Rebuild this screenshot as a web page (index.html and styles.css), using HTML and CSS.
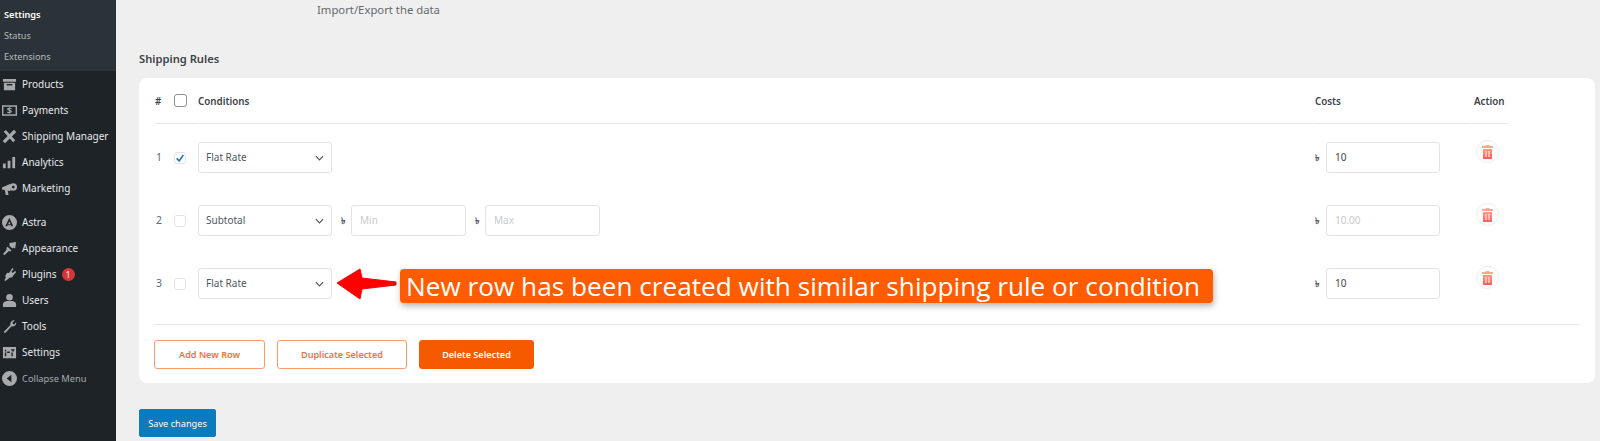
FILE: index.html
```html
<!DOCTYPE html>
<html lang="en">
<head>
    <meta charset="UTF-8">
    <title>Shipping Rules</title>
    <link rel="stylesheet" href="styles.css">
</head>
<body>
    <aside class="sidebar">
        <ul class="submenu">
            <li class="current">Settings</li>
            <li>Status</li>
            <li>Extensions</li>
        </ul>
        <ul class="menu">
            <li><svg viewBox="0 0 16 16"><path d="M1 2h14v3H1zM2 6h12v8H2z"/><path d="M5 7.500h6v1.500H5z" fill="#1d2327"/></svg>Products</li>
            <li><svg viewBox="0 0 16 16"><path fill-rule="evenodd" d="M0 2.500h16v11H0zM1.500 4v8h13V4z"/><text x="8" y="11.500" class="dollar">$</text></svg>Payments</li>
            <li><svg viewBox="0 0 16 16"><path d="M2 14L14 2" stroke="#a7aaad" stroke-width="3.500"/><path d="M3 2l10 11" stroke="#a7aaad" stroke-width="3"/></svg>Shipping Manager</li>
            <li><svg viewBox="0 0 16 16"><path d="M1 9h3v5H1zM6 6h3v8H6zM11 2h3v12h-3z"/></svg>Analytics</li>
            <li class="group-end"><svg viewBox="0 0 16 16"><path d="M0 7l9-4v8l-3-1 1 5H4L3 9.500 0 9z"/><circle cx="12" cy="6.500" r="4"/><circle cx="12" cy="6.500" r="1.500" fill="#1d2327"/></svg>Marketing</li>
            <li><svg viewBox="0 0 16 16"><path fill-rule="evenodd" d="M8 0a8 8 0 1 0 0 16A8 8 0 0 0 8 0zM7.800 3L12 12h-2L7.800 7 6.500 9.800H9l.6 1.200H6l-.5 1H3.500z"/></svg>Astra</li>
            <li><svg viewBox="0 0 16 16"><path d="M8 2l7-1-1 7-2-1-1 1-2-2-1-1zM6 6l4 4-1.500 1.500-1-1L3 15l-2-1 4-5-.5-1.500z"/></svg>Appearance</li>
            <li><svg viewBox="0 0 16 16"><path d="M11 1l1.500 1L10 5l1.500 1.500L14 4l1 1.500-3 3.500-1 2-3 .5-2.500 2-2 1.500-1-1 1.500-2.500-.5-2.500L5.500 6l2 .5z"/></svg>Plugins<span class="badge">1</span></li>
            <li><svg viewBox="0 0 16 16"><circle cx="8" cy="4.500" r="3.500"/><path d="M1 15v-3c0-2 2-3 4-3.500h6c2 .5 4 1.500 4 3.500v3z"/></svg>Users</li>
            <li><svg viewBox="0 0 16 16"><path d="M15 3.500c.5 2-1 4.500-3.500 4.500-.5 0-1 0-1.300-.2L4 14.500c-1 1-2.500-.5-1.500-1.500L9 6.500C8.500 4 10.500 1 13.500 1.500L11 4l1 1.500 1 .3z"/></svg>Tools</li>
            <li><svg viewBox="0 0 16 16"><path fill-rule="evenodd" d="M1 2h14v12H1zM3 8v4h1.500V8zM3 5v2h1.500V5zM5.500 7v1.500h3V7zM10 8v4h1.500V8zM9.500 4.500L11 7h1.500l1-2.500z"/></svg>Settings</li>
            <li class="collapse"><svg viewBox="0 0 16 16"><path fill-rule="evenodd" d="M8 0a8 8 0 1 0 0 16A8 8 0 0 0 8 0zM10 4v8L5 8z"/></svg>Collapse Menu</li>
        </ul>
    </aside>

    <main class="content">
        <p class="import-note">Import/Export the data</p>
        <h2>Shipping Rules</h2>

        <section class="card">
            <svg class="defs" width="0" height="0"><linearGradient id="binFill" x1="0" y1="0" x2="0" y2="1"><stop offset="0" stop-color="#ffb48f"/><stop offset="1" stop-color="#fd5c5c"/></linearGradient></svg>

            <div class="row head">
                <div class="cell">#</div>
                <div class="cell"><span class="check big"></span></div>
                <div class="cell">Conditions</div>
                <div class="cell">Costs</div>
                <div class="cell">Action</div>
            </div>

            <div class="row rule">
                <div class="num">1</div>
                <div><span class="check"><svg viewBox="0 0 12 12"><path d="M2 6.500l3 3 5-7" fill="none" stroke="#2b78c5" stroke-width="2"/></svg></span></div>
                <div class="cond">
                    <div class="select">Flat Rate<svg viewBox="0 0 10 6"><path d="M1 1l4 4 4-4" fill="none" stroke="#50575e" stroke-width="1.300"/></svg></div>
                </div>
                <div class="cost"><span class="cur">৳</span><div class="field filled">10</div></div>
                <div><span class="trash"><svg viewBox="0 0 11 14"><path fill-rule="evenodd" d="M3.500 0h4v1H11v2H0V1h3.500zM1 4h9v10H1zM3.500 6v6h1V6zM6.500 6v6h1V6z" fill="url(#binFill)"/></svg></span></div>
            </div>

            <div class="row rule">
                <div class="num">2</div>
                <div><span class="check"></span></div>
                <div class="cond">
                    <div class="select">Subtotal<svg viewBox="0 0 10 6"><path d="M1 1l4 4 4-4" fill="none" stroke="#50575e" stroke-width="1.300"/></svg></div>
                    <span class="cur">৳</span><div class="field wide">Min</div>
                    <span class="cur">৳</span><div class="field wide">Max</div>
                </div>
                <div class="cost"><span class="cur">৳</span><div class="field">10.00</div></div>
                <div><span class="trash"><svg viewBox="0 0 11 14"><path fill-rule="evenodd" d="M3.500 0h4v1H11v2H0V1h3.500zM1 4h9v10H1zM3.500 6v6h1V6zM6.500 6v6h1V6z" fill="url(#binFill)"/></svg></span></div>
            </div>

            <div class="row rule">
                <div class="num">3</div>
                <div><span class="check"></span></div>
                <div class="cond">
                    <div class="select">Flat Rate<svg viewBox="0 0 10 6"><path d="M1 1l4 4 4-4" fill="none" stroke="#50575e" stroke-width="1.300"/></svg></div>
                </div>
                <div class="cost"><span class="cur">৳</span><div class="field filled">10</div></div>
                <div><span class="trash"><svg viewBox="0 0 11 14"><path fill-rule="evenodd" d="M3.500 0h4v1H11v2H0V1h3.500zM1 4h9v10H1zM3.500 6v6h1V6zM6.500 6v6h1V6z" fill="url(#binFill)"/></svg></span></div>
            </div>

            <div class="actions">
                <button class="btn outline add">Add New Row</button>
                <button class="btn outline dup">Duplicate Selected</button>
                <button class="btn solid del">Delete Selected</button>
            </div>

            <!-- annotation on top of the screenshot -->
            <svg class="arrow" viewBox="0 0 60 32"><path d="M0 15L23 1l2 9 34 4v3l-34 4-2 10z" fill="#fe0000" stroke="#fe0000" stroke-linejoin="round"/></svg>
            <div class="callout">New row has been created with similar shipping rule or condition</div>
        </section>

        <button class="save">Save changes</button>
    </main>
</body>
</html>
```

FILE: styles.css
```css
* {
    box-sizing: border-box;
}
html, body {
    height: 441px;
    overflow: hidden;
}
body {
    margin: 0;
    display: flex;
    background-color: #efefef;
    font-family: "Noto Sans", sans-serif;
    font-size: 10px;
    color: #50575e;
}
ul {
    list-style: none;
    margin: 0;
    padding: 0;
}

/* sidebar */
.sidebar {
    width: 116px;
    flex-shrink: 0;
    background-color: #1d2327;
    color: #f0f0f1;
}
.submenu {
    background-color: #2c3338;
    height: 71px;
    padding: 4px 0 0 4px;
    font-size: 9.200px;
    color: #b4b9be;
}
.submenu li {
    height: 21px;
    line-height: 21px;
}
.submenu .current {
    color: #fff;
    font-weight: 600;
}
.menu li {
    display: flex;
    align-items: center;
    height: 26px;
    padding-left: 2px;
    font-size: 10px;
    white-space: nowrap;
    color: #e6e8ea;
}
.menu svg {
    width: 15px;
    height: 15px;
    margin-right: 5px;
    flex-shrink: 0;
    fill: #a7aaad;
}
.menu .dollar {
    fill: #a7aaad;
    font-size: 10px;
    font-weight: 700;
    text-anchor: middle;
}
.menu .group-end {
    margin-bottom: 8px;
}
.menu .collapse {
    color: #a7aaad;
    font-size: 9.300px;
}
.badge {
    width: 13px;
    height: 13px;
    margin-left: 5px;
    border-radius: 50%;
    background-color: #d63638;
    color: #fff;
    font-size: 8px;
    line-height: 13px;
    text-align: center;
}

/* main area */
.content {
    flex: 1;
    padding: 0 5px 0 23px;
}
.import-note {
    margin: 2px 0 0 178px;
    font-size: 11.300px;
    line-height: 15px;
    color: #646970;
}
h2 {
    margin: 33px 0 0;
    font-size: 11.200px;
    line-height: 17px;
    font-weight: 600;
    color: #3c434a;
}
.card {
    position: relative;
    height: 305px;
    margin-top: 11px;
    padding: 0 16px;
    background: #fff;
    border-radius: 8px;
}
.defs {
    position: absolute;
}
.row {
    display: grid;
    grid-template-columns: 17px 24px 1115px 155px 38px;
    gap: 0 1px;
}
.head .cell {
    height: 46px;
    padding-top: 16px;
    border-bottom: 1px solid #e6e6e6;
    font-weight: 600;
    font-size: 9.800px;
    line-height: 16px;
    color: #3c434a;
}
.head .cell:nth-child(4) {
    padding-left: 1px;
}
.head .cell:nth-child(5) {
    padding-left: 4px;
    white-space: nowrap;
}
.rule {
    height: 63px;
    padding-top: 18px;
}
.num {
    padding-top: 8px;
    padding-left: 1px;
    font-size: 10.500px;
    line-height: 15px;
    color: #646970;
}
.check {
    display: block;
    width: 12px;
    height: 12px;
    margin: 10px 0 0 1px;
    border: 1px solid #e3e3e3;
    border-radius: 3px;
    background: #fff;
}
.check svg {
    display: block;
    width: 10px;
    height: 10px;
}
.head .check {
    margin: 0 0 0 1px;
    border-color: #8c8f94;
}
.check.big {
    width: 13px;
    height: 13px;
}
.cond, .cost {
    display: flex;
    align-items: flex-start;
}
.select, .field {
    height: 31px;
    border: 1px solid #e3e3e3;
    border-radius: 3px;
    line-height: 29px;
    background: #fff;
}
.select {
    display: flex;
    justify-content: space-between;
    align-items: center;
    width: 134px;
    padding: 0 7px;
}
.select svg {
    width: 9px;
    height: 6px;
}
.cur {
    width: 9px;
    margin-left: 9px;
    font-size: 9px;
    font-weight: 600;
    line-height: 31px;
    color: #50575e;
}
.field {
    padding-left: 8px;
    color: #c8cace;
}
.field.wide {
    width: 115px;
    margin-left: 1px;
}
.cost {
    padding-left: 1px;
}
.cost .cur {
    margin-left: 0;
    width: 10px;
}
.cost .field {
    width: 114px;
    margin-left: 1px;
}
.field.filled {
    color: #3c434a;
}
.trash {
    display: flex;
    align-items: center;
    justify-content: center;
    width: 23px;
    height: 23px;
    margin: -2px 0 0 6px;
    border: 1px solid #ececec;
    border-radius: 50%;
}
.trash svg {
    width: 11px;
    height: 14px;
}
.actions {
    display: flex;
    gap: 12px;
    width: 1425px;
    margin: 11px 0 0 -1px;
    padding-top: 15px;
    border-top: 1px solid #e6e6e6;
}
.btn {
    height: 29px;
    padding: 0;
    border-radius: 3px;
    font-family: inherit;
    font-size: 9.100px;
    font-weight: 600;
}
.outline {
    background: #fff;
    border: 1px solid #f99a70;
    color: #f77234;
}
.solid {
    background: #f55a00;
    border: 1px solid #f55a00;
    color: #fff;
}
.add {
    width: 111px;
}
.dup {
    width: 130px;
}
.del {
    width: 115px;
}
.arrow {
    position: absolute;
    left: 198px;
    top: 190px;
    width: 60px;
    height: 32px;
}
.callout {
    position: absolute;
    left: 261px;
    top: 191px;
    width: 813px;
    height: 34px;
    padding-left: 6px;
    background: #fd5c00;
    border-radius: 4px;
    box-shadow: 1px 3px 6px rgba(0,0,0,0.3);
    font-family: "Open Sans", sans-serif;
    font-size: 26.200px;
    line-height: 35px;
    color: #fff;
    white-space: nowrap;
}
.save {
    display: block;
    width: 77px;
    height: 28px;
    margin-top: 26px;
    padding: 0;
    background: #0a7bbd;
    border: 1px solid #0a7bbd;
    border-radius: 2px;
    font-family: inherit;
    font-size: 9.200px;
    color: #fff;
}
```
